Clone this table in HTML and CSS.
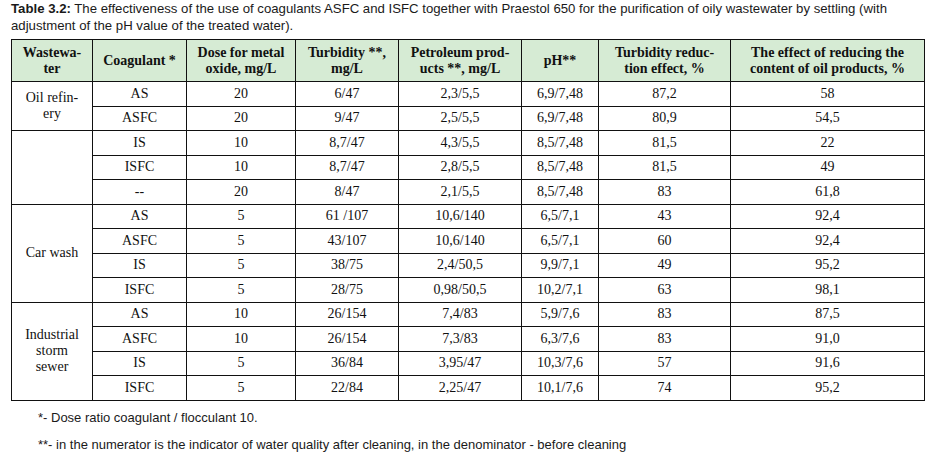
FILE: index.html
```html
<!DOCTYPE html>
<html>
<head>
<meta charset="utf-8">
<link rel="stylesheet" href="styles.css">
</head>
<body>
<div class="page">
  <p class="caption"><span class="label">Table 3.2:</span> The effectiveness of the use of coagulants ASFC and ISFC together with Praestol 650 for the purification of oily wastewater by settling (with adjustment of the pH value of the treated water).</p>
  <table class="data">
    <colgroup>
      <col style="width:81px"><col style="width:94px"><col style="width:109px"><col style="width:103px"><col style="width:123px"><col style="width:77px"><col style="width:132px"><col style="width:194px">
    </colgroup>
    <thead>
      <tr>
        <th>Wastewa-<br>ter</th>
        <th>Coagulant *</th>
        <th>Dose for metal<br>oxide, mg/L</th>
        <th>Turbidity **,<br>mg/L</th>
        <th>Petroleum prod-<br>ucts **, mg/L</th>
        <th>pH**</th>
        <th>Turbidity reduc-<br>tion effect, %</th>
        <th>The effect of reducing the<br>content of oil products, %</th>
      </tr>
    </thead>
    <tbody>
      <tr><td rowspan="2">Oil refin-<br>ery</td><td>AS</td><td>20</td><td>6/47</td><td>2,3/5,5</td><td>6,9/7,48</td><td>87,2</td><td>58</td></tr>
      <tr><td>ASFC</td><td>20</td><td>9/47</td><td>2,5/5,5</td><td>6,9/7,48</td><td>80,9</td><td>54,5</td></tr>
      <tr><td rowspan="3"></td><td>IS</td><td>10</td><td>8,7/47</td><td>4,3/5,5</td><td>8,5/7,48</td><td>81,5</td><td>22</td></tr>
      <tr><td>ISFC</td><td>10</td><td>8,7/47</td><td>2,8/5,5</td><td>8,5/7,48</td><td>81,5</td><td>49</td></tr>
      <tr><td>--</td><td>20</td><td>8/47</td><td>2,1/5,5</td><td>8,5/7,48</td><td>83</td><td>61,8</td></tr>
      <tr><td rowspan="4">Car wash</td><td>AS</td><td>5</td><td>61 /107</td><td>10,6/140</td><td>6,5/7,1</td><td>43</td><td>92,4</td></tr>
      <tr><td>ASFC</td><td>5</td><td>43/107</td><td>10,6/140</td><td>6,5/7,1</td><td>60</td><td>92,4</td></tr>
      <tr><td>IS</td><td>5</td><td>38/75</td><td>2,4/50,5</td><td>9,9/7,1</td><td>49</td><td>95,2</td></tr>
      <tr><td>ISFC</td><td>5</td><td>28/75</td><td>0,98/50,5</td><td>10,2/7,1</td><td>63</td><td>98,1</td></tr>
      <tr><td rowspan="4">Industrial<br>storm<br>sewer</td><td>AS</td><td>10</td><td>26/154</td><td>7,4/83</td><td>5,9/7,6</td><td>83</td><td>87,5</td></tr>
      <tr><td>ASFC</td><td>10</td><td>26/154</td><td>7,3/83</td><td>6,3/7,6</td><td>83</td><td>91,0</td></tr>
      <tr><td>IS</td><td>5</td><td>36/84</td><td>3,95/47</td><td>10,3/7,6</td><td>57</td><td>91,6</td></tr>
      <tr><td>ISFC</td><td>5</td><td>22/84</td><td>2,25/47</td><td>10,1/7,6</td><td>74</td><td>95,2</td></tr>
    </tbody>
  </table>
  <div class="notes">
    <p class="note">*- Dose ratio coagulant / flocculant 10.</p>
    <p class="note">**- in the numerator is the indicator of water quality after cleaning, in the denominator - before cleaning</p>
  </div>
</div>
</body>
</html>
```
FILE: styles.css
```css
html, body {
  margin: 0;
  padding: 0;
  background: #ffffff;
}
.page {
  padding: 0 4px 0 11px;
  font-family: "Liberation Sans", Arial, sans-serif;
  color: #1a1a1a;
}
.caption {
  margin: 0;
  font-size: 13.2px;
  line-height: 17px;
  width: 915px;
}
.label {
  font-weight: bold;
}
.data {
  margin-top: 5px;
  border-collapse: collapse;
  table-layout: fixed;
  width: 913px;
  font-family: "Liberation Serif", "Times New Roman", serif;
  font-size: 14px;
  color: #111;
}
.data th, .data td {
  border: 1px solid #111;
  text-align: center;
  vertical-align: middle;
  padding: 0;
}
.data th {
  background: #d6ebd4;
  font-weight: bold;
  height: 41px;
  line-height: 16px;
}
.data td {
  height: 23.5px;
  line-height: 16px;
}
.notes {
  padding-left: 27px;
  padding-top: 8px;
}
.note {
  margin: 0;
  font-size: 13px;
  line-height: 17px;
  color: #1a1a1a;
}
.note + .note {
  margin-top: 10px;
}
```
